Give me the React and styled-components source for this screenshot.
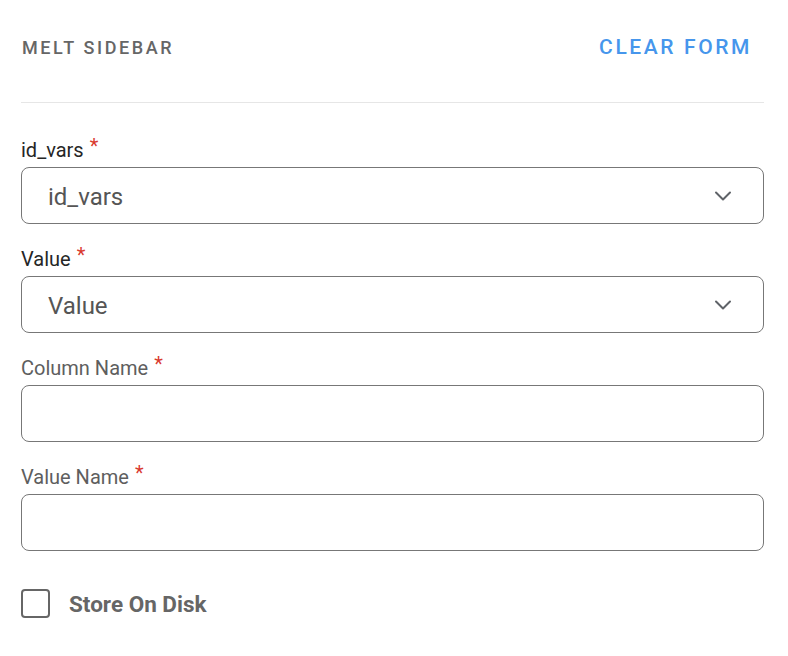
import React from "react"
import styled, { createGlobalStyle } from "styled-components"

const GlobalStyle = createGlobalStyle`
  body {
    margin: 0;
    background: #ffffff;
    font-family: Roboto, "Liberation Sans", sans-serif;
  }
`

const FIELDS = [
  { label: "id_vars", kind: "select", placeholder: "id_vars", dark: true },
  { label: "Value", kind: "select", placeholder: "Value", dark: true },
  { label: "Column Name", kind: "input" },
  { label: "Value Name", kind: "input" },
]

const Chevron = () => (
  <svg width="24" height="24" viewBox="0 0 24 24" fill="none">
    <path
      d="M5 8.5l7 7 7-7"
      stroke="#5f6368"
      strokeWidth="2"
      strokeLinecap="round"
      strokeLinejoin="round"
    />
  </svg>
)

const App = () => {
  return (
    <>
      <GlobalStyle />
      <Sidebar>
        <Header>
          <Title>MELT SIDEBAR</Title>
          <ClearButton>CLEAR FORM</ClearButton>
        </Header>
        <Divider />
        <Form>
          {FIELDS.map((field) => (
            <Field key={field.label}>
              <Label $dark={field.dark}>
                {field.label}
                <Required>*</Required>
              </Label>
              {field.kind === "select" ? (
                <Box>
                  <SelectText>{field.placeholder}</SelectText>
                  <Chevron />
                </Box>
              ) : (
                <Box as="input" type="text" />
              )}
            </Field>
          ))}
        </Form>
        <CheckRow>
          <CheckBox />
          <CheckLabel>Store On Disk</CheckLabel>
        </CheckRow>
      </Sidebar>
    </>
  )
}

export default App

const Sidebar = styled.aside`
  width: 743px;
  padding: 0 24px 0 21px;
`

const Header = styled.div`
  box-sizing: border-box;
  display: flex;
  align-items: center;
  justify-content: space-between;
  height: 102px;
  padding: 0 12px 8px 1px;
`

const Title = styled.h2`
  margin: 0;
  font-size: 18px;
  font-weight: 500;
  letter-spacing: 2.6px;
  color: #666666;
`

const ClearButton = styled.button`
  border: none;
  background: none;
  padding: 0;
  font-family: inherit;
  font-size: 21px;
  font-weight: 500;
  letter-spacing: 2.6px;
  color: #4696ec;
  cursor: pointer;
`

const Divider = styled.div`
  height: 1px;
  background: #e6e6e6;
`

const Form = styled.div`
  display: flex;
  flex-direction: column;
  gap: 24px;
  padding-top: 36px;
`

const Field = styled.div`
  display: flex;
  flex-direction: column;
  gap: 6px;
`

const Label = styled.label`
  font-size: 20px;
  line-height: 22px;
  color: ${(p) => (p.$dark ? "#262626" : "#5e5e5e")};
`

const Required = styled.span`
  margin-left: 6px;
  color: #d93a2f;
  position: relative;
  top: -4px;
`

const Box = styled.div`
  box-sizing: border-box;
  display: flex;
  align-items: center;
  justify-content: space-between;
  width: 100%;
  height: 57px;
  padding: 0 28px 0 26px;
  border: 1px solid #777777;
  border-radius: 8px;
  background: #ffffff;
  font-family: inherit;
  font-size: 21px;
  outline: none;
`

const SelectText = styled.span`
  font-size: 24px;
  color: #555555;
  padding-top: 2px;
`

const CheckRow = styled.div`
  display: flex;
  align-items: center;
  gap: 19px;
  margin-top: 38px;
`

const CheckBox = styled.span`
  box-sizing: border-box;
  width: 29px;
  height: 29px;
  border: 2px solid #666666;
  border-radius: 4px;
`

const CheckLabel = styled.span`
  font-size: 22.5px;
  font-weight: 700;
  color: #666666;
`
